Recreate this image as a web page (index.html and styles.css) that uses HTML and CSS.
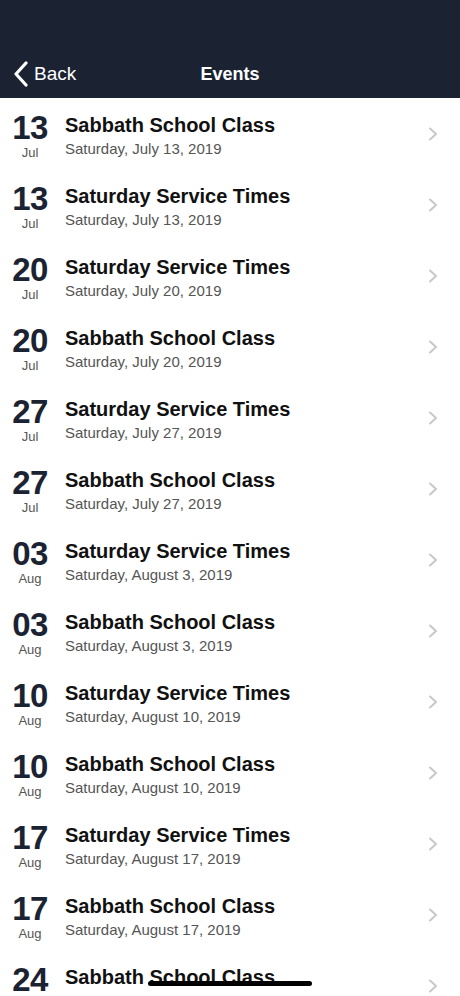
FILE: index.html
```html
<!DOCTYPE html>
<html>
<head lang="en">
    <meta charset="UTF-8">
    <title>Events</title>
    <link rel="stylesheet" href="styles.css">
</head>
<body>
    <div class="header">
        <a class="back" href="javascript:;">
            <svg class="back-icon" width="16" height="26" viewBox="0 0 16 26">
                <path d="M13 2 L3 13 L13 24" fill="none" stroke="#fff" stroke-width="3.2" stroke-linecap="round" stroke-linejoin="round"/>
            </svg>
            <span>Back</span>
        </a>
        <div class="title">Events</div>
    </div>
    <ul class="list">
        <li class="row">
            <div class="date"><div class="day">13</div><div class="month">Jul</div></div>
            <div class="info"><div class="name">Sabbath School Class</div><div class="when">Saturday, July 13, 2019</div></div>
            <svg class="chev" width="10" height="14" viewBox="0 0 10 14"><path d="M2 1.5 L8 7 L2 12.5" fill="none" stroke="#c7c7cc" stroke-width="2" stroke-linecap="round" stroke-linejoin="round"/></svg>
        </li>
        <li class="row">
            <div class="date"><div class="day">13</div><div class="month">Jul</div></div>
            <div class="info"><div class="name">Saturday Service Times</div><div class="when">Saturday, July 13, 2019</div></div>
            <svg class="chev" width="10" height="14" viewBox="0 0 10 14"><path d="M2 1.5 L8 7 L2 12.5" fill="none" stroke="#c7c7cc" stroke-width="2" stroke-linecap="round" stroke-linejoin="round"/></svg>
        </li>
        <li class="row">
            <div class="date"><div class="day">20</div><div class="month">Jul</div></div>
            <div class="info"><div class="name">Saturday Service Times</div><div class="when">Saturday, July 20, 2019</div></div>
            <svg class="chev" width="10" height="14" viewBox="0 0 10 14"><path d="M2 1.5 L8 7 L2 12.5" fill="none" stroke="#c7c7cc" stroke-width="2" stroke-linecap="round" stroke-linejoin="round"/></svg>
        </li>
        <li class="row">
            <div class="date"><div class="day">20</div><div class="month">Jul</div></div>
            <div class="info"><div class="name">Sabbath School Class</div><div class="when">Saturday, July 20, 2019</div></div>
            <svg class="chev" width="10" height="14" viewBox="0 0 10 14"><path d="M2 1.5 L8 7 L2 12.5" fill="none" stroke="#c7c7cc" stroke-width="2" stroke-linecap="round" stroke-linejoin="round"/></svg>
        </li>
        <li class="row">
            <div class="date"><div class="day">27</div><div class="month">Jul</div></div>
            <div class="info"><div class="name">Saturday Service Times</div><div class="when">Saturday, July 27, 2019</div></div>
            <svg class="chev" width="10" height="14" viewBox="0 0 10 14"><path d="M2 1.5 L8 7 L2 12.5" fill="none" stroke="#c7c7cc" stroke-width="2" stroke-linecap="round" stroke-linejoin="round"/></svg>
        </li>
        <li class="row">
            <div class="date"><div class="day">27</div><div class="month">Jul</div></div>
            <div class="info"><div class="name">Sabbath School Class</div><div class="when">Saturday, July 27, 2019</div></div>
            <svg class="chev" width="10" height="14" viewBox="0 0 10 14"><path d="M2 1.5 L8 7 L2 12.5" fill="none" stroke="#c7c7cc" stroke-width="2" stroke-linecap="round" stroke-linejoin="round"/></svg>
        </li>
        <li class="row">
            <div class="date"><div class="day">03</div><div class="month">Aug</div></div>
            <div class="info"><div class="name">Saturday Service Times</div><div class="when">Saturday, August 3, 2019</div></div>
            <svg class="chev" width="10" height="14" viewBox="0 0 10 14"><path d="M2 1.5 L8 7 L2 12.5" fill="none" stroke="#c7c7cc" stroke-width="2" stroke-linecap="round" stroke-linejoin="round"/></svg>
        </li>
        <li class="row">
            <div class="date"><div class="day">03</div><div class="month">Aug</div></div>
            <div class="info"><div class="name">Sabbath School Class</div><div class="when">Saturday, August 3, 2019</div></div>
            <svg class="chev" width="10" height="14" viewBox="0 0 10 14"><path d="M2 1.5 L8 7 L2 12.5" fill="none" stroke="#c7c7cc" stroke-width="2" stroke-linecap="round" stroke-linejoin="round"/></svg>
        </li>
        <li class="row">
            <div class="date"><div class="day">10</div><div class="month">Aug</div></div>
            <div class="info"><div class="name">Saturday Service Times</div><div class="when">Saturday, August 10, 2019</div></div>
            <svg class="chev" width="10" height="14" viewBox="0 0 10 14"><path d="M2 1.5 L8 7 L2 12.5" fill="none" stroke="#c7c7cc" stroke-width="2" stroke-linecap="round" stroke-linejoin="round"/></svg>
        </li>
        <li class="row">
            <div class="date"><div class="day">10</div><div class="month">Aug</div></div>
            <div class="info"><div class="name">Sabbath School Class</div><div class="when">Saturday, August 10, 2019</div></div>
            <svg class="chev" width="10" height="14" viewBox="0 0 10 14"><path d="M2 1.5 L8 7 L2 12.5" fill="none" stroke="#c7c7cc" stroke-width="2" stroke-linecap="round" stroke-linejoin="round"/></svg>
        </li>
        <li class="row">
            <div class="date"><div class="day">17</div><div class="month">Aug</div></div>
            <div class="info"><div class="name">Saturday Service Times</div><div class="when">Saturday, August 17, 2019</div></div>
            <svg class="chev" width="10" height="14" viewBox="0 0 10 14"><path d="M2 1.5 L8 7 L2 12.5" fill="none" stroke="#c7c7cc" stroke-width="2" stroke-linecap="round" stroke-linejoin="round"/></svg>
        </li>
        <li class="row">
            <div class="date"><div class="day">17</div><div class="month">Aug</div></div>
            <div class="info"><div class="name">Sabbath School Class</div><div class="when">Saturday, August 17, 2019</div></div>
            <svg class="chev" width="10" height="14" viewBox="0 0 10 14"><path d="M2 1.5 L8 7 L2 12.5" fill="none" stroke="#c7c7cc" stroke-width="2" stroke-linecap="round" stroke-linejoin="round"/></svg>
        </li>
        <li class="row">
            <div class="date"><div class="day">24</div></div>
            <div class="info"><div class="name">Sabbath School Class</div></div>
            <svg class="chev" width="10" height="14" viewBox="0 0 10 14"><path d="M2 1.5 L8 7 L2 12.5" fill="none" stroke="#c7c7cc" stroke-width="2" stroke-linecap="round" stroke-linejoin="round"/></svg>
        </li>
    </ul>
    <div class="home-bar"></div>
</body>
</html>
```

FILE: styles.css
```css
html, body{
    margin: 0;
    padding: 0;
    height: 996px;
    overflow: hidden;
    background: #fff;
    font-family: "Liberation Sans", Arial, sans-serif;
}
.header{
    height: 98px;
    background-color: #1b2333;
    position: relative;
    display: flex;
    align-items: flex-end;
    justify-content: center;
}
.back{
    position: absolute;
    left: 13px;
    bottom: 11px;
    display: flex;
    align-items: center;
    color: #fff;
    text-decoration: none;
    font-size: 19px;
}
.back-icon{
    margin-right: 5px;
}
.title{
    color: #fff;
    font-size: 18px;
    font-weight: bold;
    padding-bottom: 13px;
}
.list{
    list-style: none;
    margin: 0;
    padding: 0;
}
.row{
    height: 71px;
    display: flex;
    align-items: flex-start;
    padding: 0 22px 0 8px;
}
.date{
    width: 44px;
    text-align: center;
    color: #1b2333;
    padding-top: 14px;
}
.day{
    font-size: 33px;
    font-weight: bold;
    line-height: 32px;
    letter-spacing: -0.5px;
}
.month{
    font-size: 13px;
    color: #555;
    line-height: 17px;
    margin-top: 0;
}
.info{
    flex: 1;
    padding-left: 13px;
    padding-top: 15px;
}
.name{
    font-size: 20px;
    font-weight: bold;
    color: #111;
    line-height: 24px;
}
.when{
    font-size: 15px;
    color: #555;
    line-height: 20px;
    margin-top: 2px;
}
.chev{
    margin-top: 29px;
}
.home-bar{
    position: absolute;
    left: 148px;
    top: 981px;
    width: 164px;
    height: 5px;
    border-radius: 3px;
    background: #000;
}
```
